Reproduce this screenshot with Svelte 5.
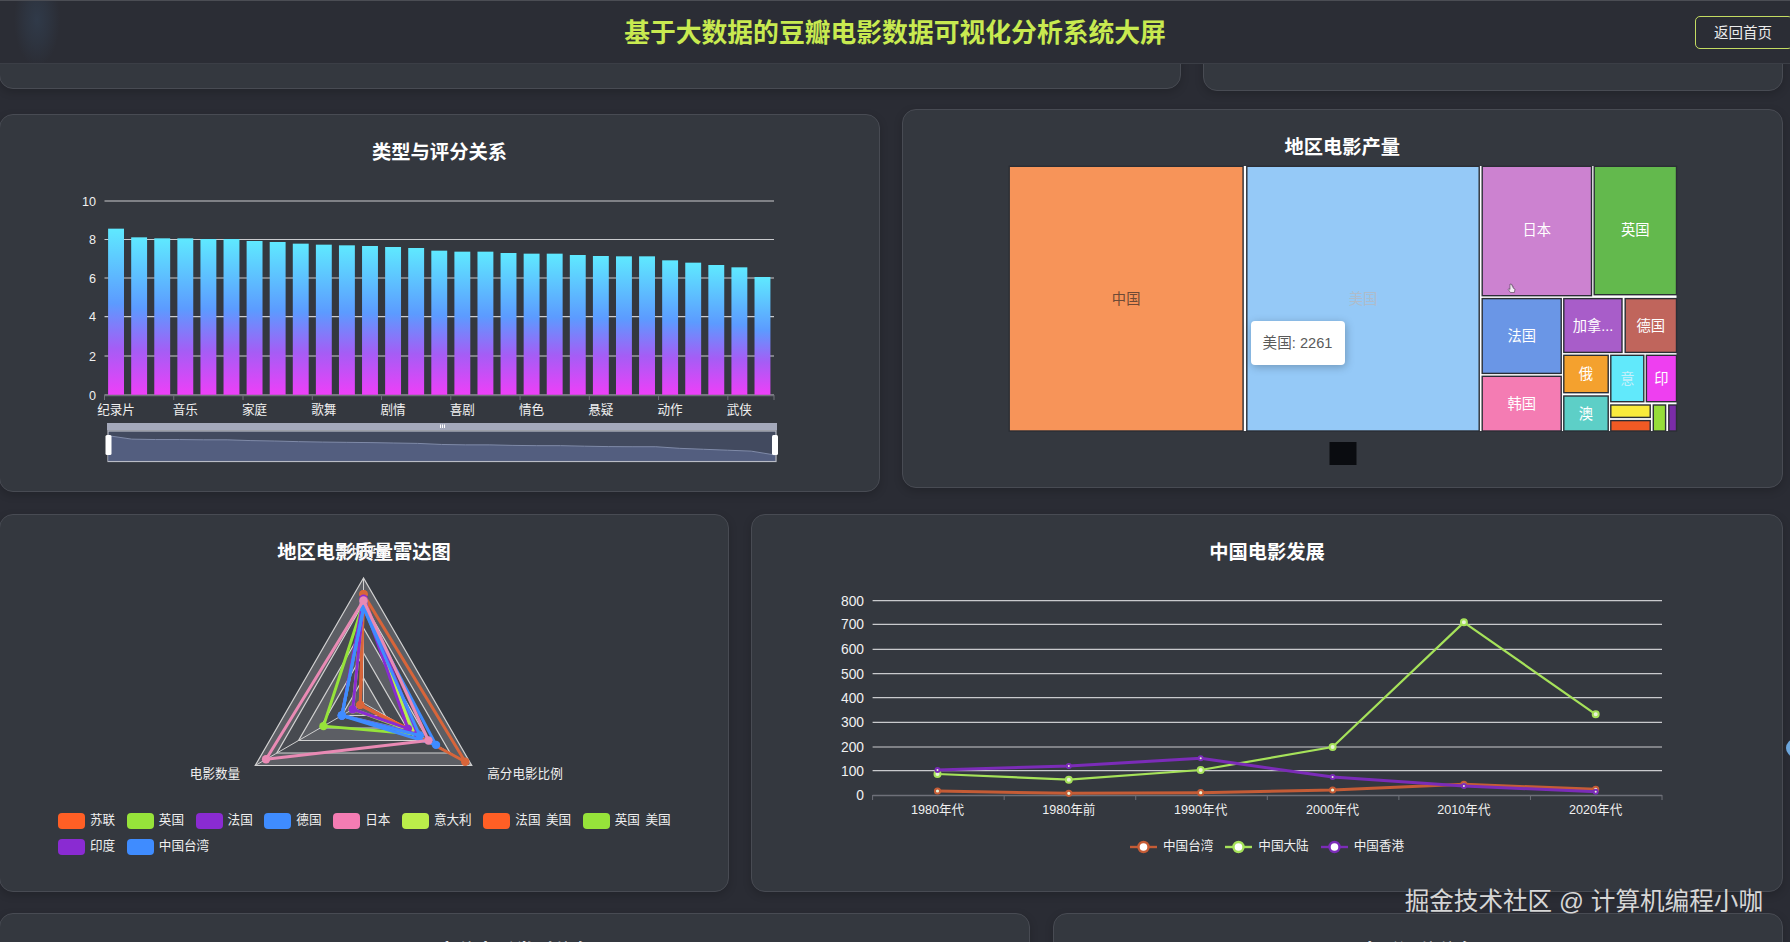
<script>
  const barTops = [686,712,715,715,717,717,723,726,731,734,736,738,741,744,752,755,755,759,761,761,765,768,769,769,781,788,795,802,831];
  const bandW = (774 - 104.5) / 29;
  const bars = barTops.map((t, i) => ({ x: 104.5 + bandW * i + 3.6, y: t / 3, h: 395 - t / 3, w: 15.9 }));
  const barLabels = ['纪录片','音乐','家庭','歌舞','剧情','喜剧','情色','悬疑','动作','武侠'];
  const barTicks = [...Array(10).keys()].map((i) => 104.5 + bandW * 3 * i).concat(774);
  const barGrid = [[10,201],[8,239.5],[6,278],[4,316.7],[2,356],[0,395]];
  const dzPts = barTops.map((t, i) => [108 + (i / 28) * 667, (1307 + (t - 686) * 0.4) / 3]);
  const dzLine = dzPts.map((p) => p.join(',')).join(' ');
  const dzArea = `108,461 ${dzLine} 775,461`;

  const tiles = [
    { n:'中国', c:'#f79459', x:1009.4, y:167, x2:1241.9, y2:430.3, t:'#6e4a36', ly:299 },
    { n:'美国', c:'#95c9f7', x:1247, y:167, x2:1478, y2:430.3, t:'#aebccb', ly:299 },
    { n:'日本', c:'#cc82d0', x:1482.4, y:167, x2:1590.3, y2:295, t:'#fff', ly:230 },
    { n:'英国', c:'#63b94d', x:1594.4, y:167, x2:1675.3, y2:294, t:'#fff', ly:230 },
    { n:'法国', c:'#6a96e6', x:1482.4, y:299.3, x2:1560, y2:372.7, t:'#fff' },
    { n:'韩国', c:'#f47cb3', x:1482.4, y:377, x2:1560, y2:430.3, t:'#fff', ly:404 },
    { n:'加拿...', c:'#a85dc9', x:1564, y:299.3, x2:1620.8, y2:351.7, t:'#fff' },
    { n:'德国', c:'#c0655c', x:1625.4, y:299.3, x2:1675.3, y2:351.7, t:'#fff' },
    { n:'俄', c:'#f4a12e', x:1564, y:356, x2:1607, y2:392, t:'#fff' },
    { n:'澳', c:'#5dcfc7', x:1564, y:396.7, x2:1607, y2:430.3, t:'#fff' },
    { n:'意', c:'#61e9fb', x:1611, y:356, x2:1642.6, y2:401, t:'#c6f0fa' },
    { n:'印', c:'#ee3ff0', x:1646.6, y:356, x2:1675.3, y2:401, t:'#fff' },
    { n:'', c:'#f9ea3c', x:1611, y:405.7, x2:1649, y2:416.7 },
    { n:'', c:'#f15a24', x:1611, y:421.3, x2:1649, y2:430.3 },
    { n:'', c:'#96dd3a', x:1653.5, y:405.7, x2:1664.4, y2:430.3 },
    { n:'', c:'#7b2ca8', x:1669, y:405.7, x2:1675.3, y2:430.3 }
  ];

  const cx = 363.5, cy = 703, R = 125;
  const axes = [[0,-1],[-0.866,0.5],[0.866,0.5]];
  const pt = (a, f) => [cx + axes[a][0] * R * f, cy + axes[a][1] * R * f];
  const tri = (t, l, r) => [pt(0,t), pt(1,l), pt(2,r)];
  const ptsStr = (p) => p.map((q) => q.join(',')).join(' ');
  const rings = [1,0.8,0.6,0.4,0.2].map((f, i) => ({ p: ptsStr(tri(f,f,f)), fill: i % 2 ? '#474a50' : '#5c5e64' }));
  const radar = [
    { c:'#ff5f25', v:[.87,.03,.41] },
    { c:'#d8653a', v:[.87,.03,.94] },
    { c:'#96e33a', v:[.8,.37,.5] },
    { c:'#4fd0c8', v:[.78,.2,.48] },
    { c:'#bbee4a', v:[.8,.1,.45] },
    { c:'#8a2bd2', v:[.835,.2,.5] },
    { c:'#8a2bd2', v:[.8,.1,.41] },
    { c:'#3f8cff', v:[.76,.2,.67] },
    { c:'#3f8cff', v:[.76,.2,.52] },
    { c:'#e98ab4', v:[.82,.9,.6] }
  ].map((s) => ({ c: s.c, pts: tri(...s.v) }));
  const radarLegend = [
    ['苏联','#ff5f25'],['英国','#96e33a'],['法国','#8a2bd2'],['德国','#3f8cff'],['日本','#f47cb3'],
    ['意大利','#bbee4a'],['法国 美国','#ff5f25'],['英国 美国','#96e33a'],['印度','#8a2bd2'],['中国台湾','#3f8cff']
  ];

  const lineY = [[800,600.7],[700,624.3],[600,649.3],[500,673.7],[400,697.7],[300,722.3],[200,747],[100,770.7],[0,795]];
  const lineX = [937.5,1068.8,1200.7,1332.6,1463.9,1595.7];
  const lineCats = ['1980年代','1980年前','1990年代','2000年代','2010年代','2020年代'];
  const lineTicks = [0,1,2,3,4,5,6].map((i) => 872.6 + i * 131.57);
  const mk = (a) => a.map((z, i) => [lineX[i], 500 + z / 3]);
  const lines = [
    { n:'中国台湾', c:'#c55c36', w:3, r:2.6, p:mk([873,880,878,870,853,868]) },
    { n:'中国大陆', c:'#a6e25a', w:2.2, r:3, p:mk([822,839,810,741,367,643]) },
    { n:'中国香港', c:'#7b2cb8', w:3, r:2, p:mk([810,798,775,831,858,875]) }
  ];
</script>

<div class="page">
  <header class="topbar">
    <div class="glow"></div>
    <h1>基于大数据的豆瓣电影数据可视化分析系统大屏</h1>
    <button class="home">返回首页</button>
  </header>

  <main class="board">
    <section class="row row1">
      <div class="card c1l"></div>
      <div class="card"></div>
    </section>

    <section class="row row2">
      <div class="card c2l">
        <h3>类型与评分关系</h3>
        <svg class="chart" width="878" height="325" viewBox="0 166 878 325">
          <defs>
            <linearGradient id="barG" x1="0" y1="0" x2="0" y2="1">
              <stop offset="0" stop-color="#5fe9ff" />
              <stop offset="0.45" stop-color="#5c9bff" />
              <stop offset="0.72" stop-color="#a55df5" />
              <stop offset="1" stop-color="#ee3ff8" />
            </linearGradient>
          </defs>
          {#each barGrid as g}
            <line x1="104.5" x2="774" y1={g[1]} y2={g[1]} class="grid" />
            <text x="96" y={g[1] + 4.5} class="lbl" text-anchor="end">{g[0]}</text>
          {/each}
          {#each bars as b}
            <rect x={b.x} y={b.y} width={b.w} height={b.h} fill="url(#barG)" />
          {/each}
          <line x1="104.5" x2="774" y1="395.5" y2="395.5" class="axis" />
          {#each barTicks as t}
            <line x1={t} x2={t} y1="395" y2="400" class="tick" />
          {/each}
          {#each barLabels as l, i}
            <text x={104.5 + bandW * (3 * i + 0.5)} y="413.5" class="lbl" text-anchor="middle">{l}</text>
          {/each}

          <rect x="107" y="423" width="670" height="7.5" fill="#a4a9bb" />
          <path d="M440.5 424.5v3.5M442.5 424.5v3.5M444.5 424.5v3.5" stroke="#fff" stroke-width="1" />
          <rect x="108" y="431" width="668" height="30.5" fill="#424a5f" stroke="#b9bcc6" stroke-width="1.2" />
          <polygon points={dzArea} fill="#59658a" opacity="0.75" />
          <polyline points={dzLine} fill="none" stroke="#7f8aa8" stroke-width="1" />
          <rect x="105.5" y="435" width="6" height="20" rx="1.5" fill="#fff" />
          <rect x="772" y="435" width="6" height="20" rx="1.5" fill="#fff" />
        </svg>
      </div>

      <div class="card">
        <h3>地区电影产量</h3>
        <svg class="chart" width="879" height="326" viewBox="902.5 161 879 326">
          <rect x="1242.5" y="166" width="433.5" height="265" fill="#fff" />
          {#each tiles as t}
            <rect x={t.x - 0.7} y={t.y - 0.7} width={t.x2 - t.x + 1.4} height={t.y2 - t.y + 1.4} fill={t.c} stroke="#2b2e35" stroke-width="1.4" />
            {#if t.n}
              <text x={(t.x + t.x2) / 2} y={(t.ly ?? (t.y + t.y2) / 2) + 5} text-anchor="middle" class="tile" fill={t.t}>{t.n}</text>
            {/if}
          {/each}
          <rect x="1329" y="442" width="27" height="23" fill="#0a0c10" />
          <path d="M1509.5 284v5.5l-1.2-1-.6.8 2.2 3.2h4l.6-3.5-2-1v-2l-1 .2v-1.7z" fill="#f4eef4" stroke="#4a3a4e" stroke-width="0.6" />
        </svg>
        <div class="tooltip">美国: 2261</div>
      </div>
    </section>

    <section class="row row3">
      <div class="card">
        <h3>地区电影质量雷达图</h3>
        <svg class="chart" width="727" height="247" viewBox="0 566 727 247">
          {#each rings as r}
            <polygon points={r.p} fill={r.fill} stroke="#d2d2d2" stroke-width="1.2" />
          {/each}
          {#each axes as _, i}
            <line x1={cx} y1={cy} x2={pt(i, 1)[0]} y2={pt(i, 1)[1]} stroke="#cfcfcf" stroke-width="1" />
          {/each}
          {#each radar as s}
            <polygon points={ptsStr(s.pts)} fill="none" stroke={s.c} stroke-width="3" stroke-linejoin="round" />
            {#each s.pts as p}
              <circle cx={p[0]} cy={p[1]} r="4.2" fill={s.c} />
            {/each}
          {/each}
          <text x="363.5" y="556" text-anchor="middle" class="lbl axisname">平均评分</text>
          <text x="215" y="777.5" text-anchor="middle" class="lbl">电影数量</text>
          <text x="525" y="777.5" text-anchor="middle" class="lbl">高分电影比例</text>
        </svg>
        <div class="radar-legend">
          {#each radarLegend as l}
            <div class="leg"><span class="swatch" style:background={l[1]}></span><span class="ltext">{l[0]}</span></div>
          {/each}
        </div>
      </div>

      <div class="card">
        <h3>中国电影发展</h3>
        <svg class="chart" width="1030" height="273" viewBox="752 566 1030 273">
          {#each lineY as g}
            {#if g[0] > 0}<line x1="872.6" x2="1662" y1={g[1]} y2={g[1]} class="grid" />{/if}
            <text x="864" y={g[1] + 4.8} class="lbl ynum" text-anchor="end">{g[0]}</text>
          {/each}
          <line x1="872.6" x2="1662" y1="795.5" y2="795.5" class="axis" />
          {#each lineTicks as t}
            <line x1={t} x2={t} y1="795" y2="800" class="tick" />
          {/each}
          {#each lineCats as c, i}
            <text x={lineX[i]} y="814" class="lbl" text-anchor="middle">{c}</text>
          {/each}
          {#each lines as l}
            <polyline points={ptsStr(l.p)} fill="none" stroke={l.c} stroke-width={l.w} stroke-linejoin="round" />
            {#each l.p as p}
              <circle cx={p[0]} cy={p[1]} r={l.r} fill="#e9f3d8" stroke={l.c} stroke-width="2" />
            {/each}
          {/each}
        </svg>
        <div class="line-legend">
          {#each lines as l}
            <div class="lleg">
              <svg width="27" height="16" viewBox="0 0 27 16">
                <line x1="0" x2="27" y1="8" y2="8" stroke={l.c} stroke-width="2.4" />
                <circle cx="13.5" cy="8" r="5" fill="#fff" stroke={l.c} stroke-width="2.4" />
              </svg>
              <span class="ltext">{l.n}</span>
            </div>
          {/each}
        </div>
      </div>
    </section>

    <section class="row row4">
      <div class="card"><h3>高分电影类型分布</h3></div>
      <div class="card"><h3>电影评分分布</h3></div>
    </section>
  </main>

  <div class="watermark">掘金技术社区 @ 计算机编程小咖</div>
  <div class="edge-dot"></div>
</div>

<style>
  :global(body) {
    margin: 0;
    background: #2a2c34;
  }
  .page {
    position: relative;
    width: 1790px;
    height: 942px;
    overflow: hidden;
    background: #2a2c34;
    font-family: "Liberation Sans", "Noto Sans CJK SC", sans-serif;
    color: #fff;
  }
  .topbar {
    position: absolute;
    inset: 0 0 auto 0;
    z-index: 5;
    height: 64px;
    box-sizing: border-box;
    display: grid;
    grid-template-columns: 1fr auto 1fr;
    align-items: center;
    background: #2b2d35;
    border-top: 1px solid #4b4d54;
    border-bottom: 1px solid #3b3e46;
  }
  .glow {
    position: absolute;
    left: 14px;
    top: 0;
    width: 46px;
    height: 62px;
    background: radial-gradient(ellipse 50% 75% at 50% 30%, #303a49 0%, rgba(48, 58, 73, 0.55) 50%, rgba(43, 45, 53, 0) 100%);
  }
  h1 {
    grid-column: 2;
    margin: 1px 0 0;
    font-size: 25.8px;
    line-height: 36px;
    font-weight: 700;
    color: #c8ea50;
    white-space: nowrap;
  }
  .home {
    grid-column: 3;
    justify-self: end;
    margin-right: -3px;
    width: 98px;
    height: 33px;
    box-sizing: border-box;
    padding: 0 0 2px 3px;
    background: transparent;
    border: 1px solid #c4dc62;
    border-radius: 5px;
    color: #ececec;
    font-family: inherit;
    font-size: 14.5px;
    text-align: left;
    text-indent: 15px;
  }
  .board {
    margin-left: -1px;
    width: 1784px;
  }
  .row {
    display: grid;
    align-items: start;
  }
  .row1 { grid-template-columns: 1182px 580px; column-gap: 22px; }
  .row1 .card { height: 91px; }
  .row1 .c1l { height: 89px; }
  .row2 { grid-template-columns: 881px 881.5px; column-gap: 21.5px; margin-top: 18px; }
  .row2 .card { height: 379px; position: relative; }
  .row2 .c2l { height: 378px; margin-top: 5px; }
  .row3 { grid-template-columns: 730px 1032px; column-gap: 22px; margin-top: 22px; }
  .row3 .card { height: 378px; }
  .row4 { grid-template-columns: 1031px 730px; column-gap: 23px; margin-top: 21px; }
  .row4 .card { height: 300px; }
  .card {
    box-sizing: border-box;
    border: 1px solid #484b53;
    border-radius: 14px;
    background: #34383f;
    box-shadow: 0 3px 8px rgba(0, 0, 0, 0.18);
  }
  h3 {
    margin: 0;
    padding-top: 24px;
    height: 27px;
    box-sizing: content-box;
    font-size: 19.3px;
    line-height: 28px;
    font-weight: 700;
    text-align: center;
    color: #fff;
  }
  .chart {
    display: block;
    overflow: visible;
  }
  .grid {
    stroke: #c9cacd;
    stroke-width: 1.2;
  }
  .axis {
    stroke: #6e7079;
    stroke-width: 1.6;
  }
  .tick {
    stroke: #6e7079;
    stroke-width: 1;
  }
  .lbl {
    font-size: 12.6px;
    fill: #f0f0f0;
  }
  .ynum {
    font-size: 13.8px;
  }
  .axisname {
    font-weight: 700;
    fill: #f4f4f4;
  }
  .tile {
    font-size: 14.3px;
  }
  .tooltip {
    position: absolute;
    left: 348px;
    top: 211px;
    width: 94px;
    height: 44px;
    box-sizing: border-box;
    border-radius: 4px;
    background: #fff;
    box-shadow: 1px 2px 8px rgba(0, 0, 0, 0.25);
    color: #5a5a5a;
    font-size: 14.6px;
    line-height: 44px;
    text-align: center;
  }
  .radar-legend {
    display: flex;
    flex-wrap: wrap;
    gap: 10px 11.6px;
    width: 640px;
    margin-left: 58px;
  }
  .leg {
    display: flex;
    align-items: center;
    gap: 5px;
    height: 16px;
    font-size: 12.6px;
    word-spacing: 2px;
    color: #f0f0f0;
  }
  .ltext {
    display: block;
    line-height: 20px;
    margin-top: -3px;
  }
  .swatch {
    width: 27px;
    height: 16px;
    border-radius: 4px;
  }
  .line-legend {
    display: flex;
    justify-content: center;
    gap: 12px;
  }
  .lleg {
    display: flex;
    align-items: center;
    gap: 6px;
    height: 16px;
    font-size: 12.6px;
    color: #f0f0f0;
  }
  .watermark {
    position: absolute;
    right: 27px;
    top: 887px;
    z-index: 6;
    font-size: 24.6px;
    line-height: 30px;
    color: #d6d6d6;
    white-space: nowrap;
  }
  .edge-dot {
    position: absolute;
    left: 1786px;
    top: 739px;
    width: 18px;
    height: 18px;
    border-radius: 50%;
    background: #6ca6dc;
  }
</style>
